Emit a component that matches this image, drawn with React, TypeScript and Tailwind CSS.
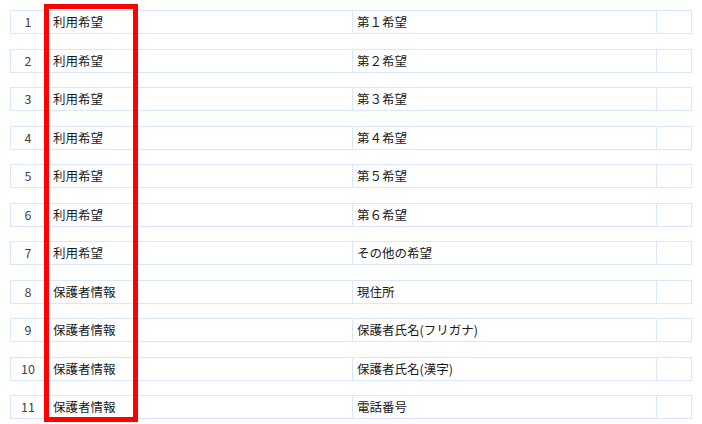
import React from "react";

const rows: [string, string][] = [
  ["利用希望", "第１希望"],
  ["利用希望", "第２希望"],
  ["利用希望", "第３希望"],
  ["利用希望", "第４希望"],
  ["利用希望", "第５希望"],
  ["利用希望", "第６希望"],
  ["利用希望", "その他の希望"],
  ["保護者情報", "現住所"],
  ["保護者情報", "保護者氏名(フリガナ)"],
  ["保護者情報", "保護者氏名(漢字)"],
  ["保護者情報", "電話番号"],
];

export default function App() {
  return (
    <div
      className="relative w-[702px] h-[424px] bg-white overflow-hidden text-[12.5px] text-[#1a1a1a]"
      style={{ fontFamily: '"Noto Sans CJK JP", "Noto Sans", sans-serif' }}
    >
      <div className="flex flex-col gap-[14.5px] pt-[10px] pl-[10px]">
        {rows.map(([a, b], i) => (
          <div
            key={i}
            className="flex w-[682px] h-[24px] border border-[#d8e8f8] leading-[22px]"
          >
            <div className="w-[34px] border-r border-[#d8e8f8] text-center pl-[1px] text-[#444]">
              {i + 1}
            </div>
            <div className="w-[308px] border-r border-[#d8e8f8] pl-[8px]">{a}</div>
            <div className="w-[304px] border-r border-[#d8e8f8] pl-[4px]">{b}</div>
            <div className="flex-1" />
          </div>
        ))}
      </div>
      <div className="absolute left-[44px] top-[4px] w-[94px] h-[418px] border-[5px] border-[#ff0000]" />
    </div>
  );
}
